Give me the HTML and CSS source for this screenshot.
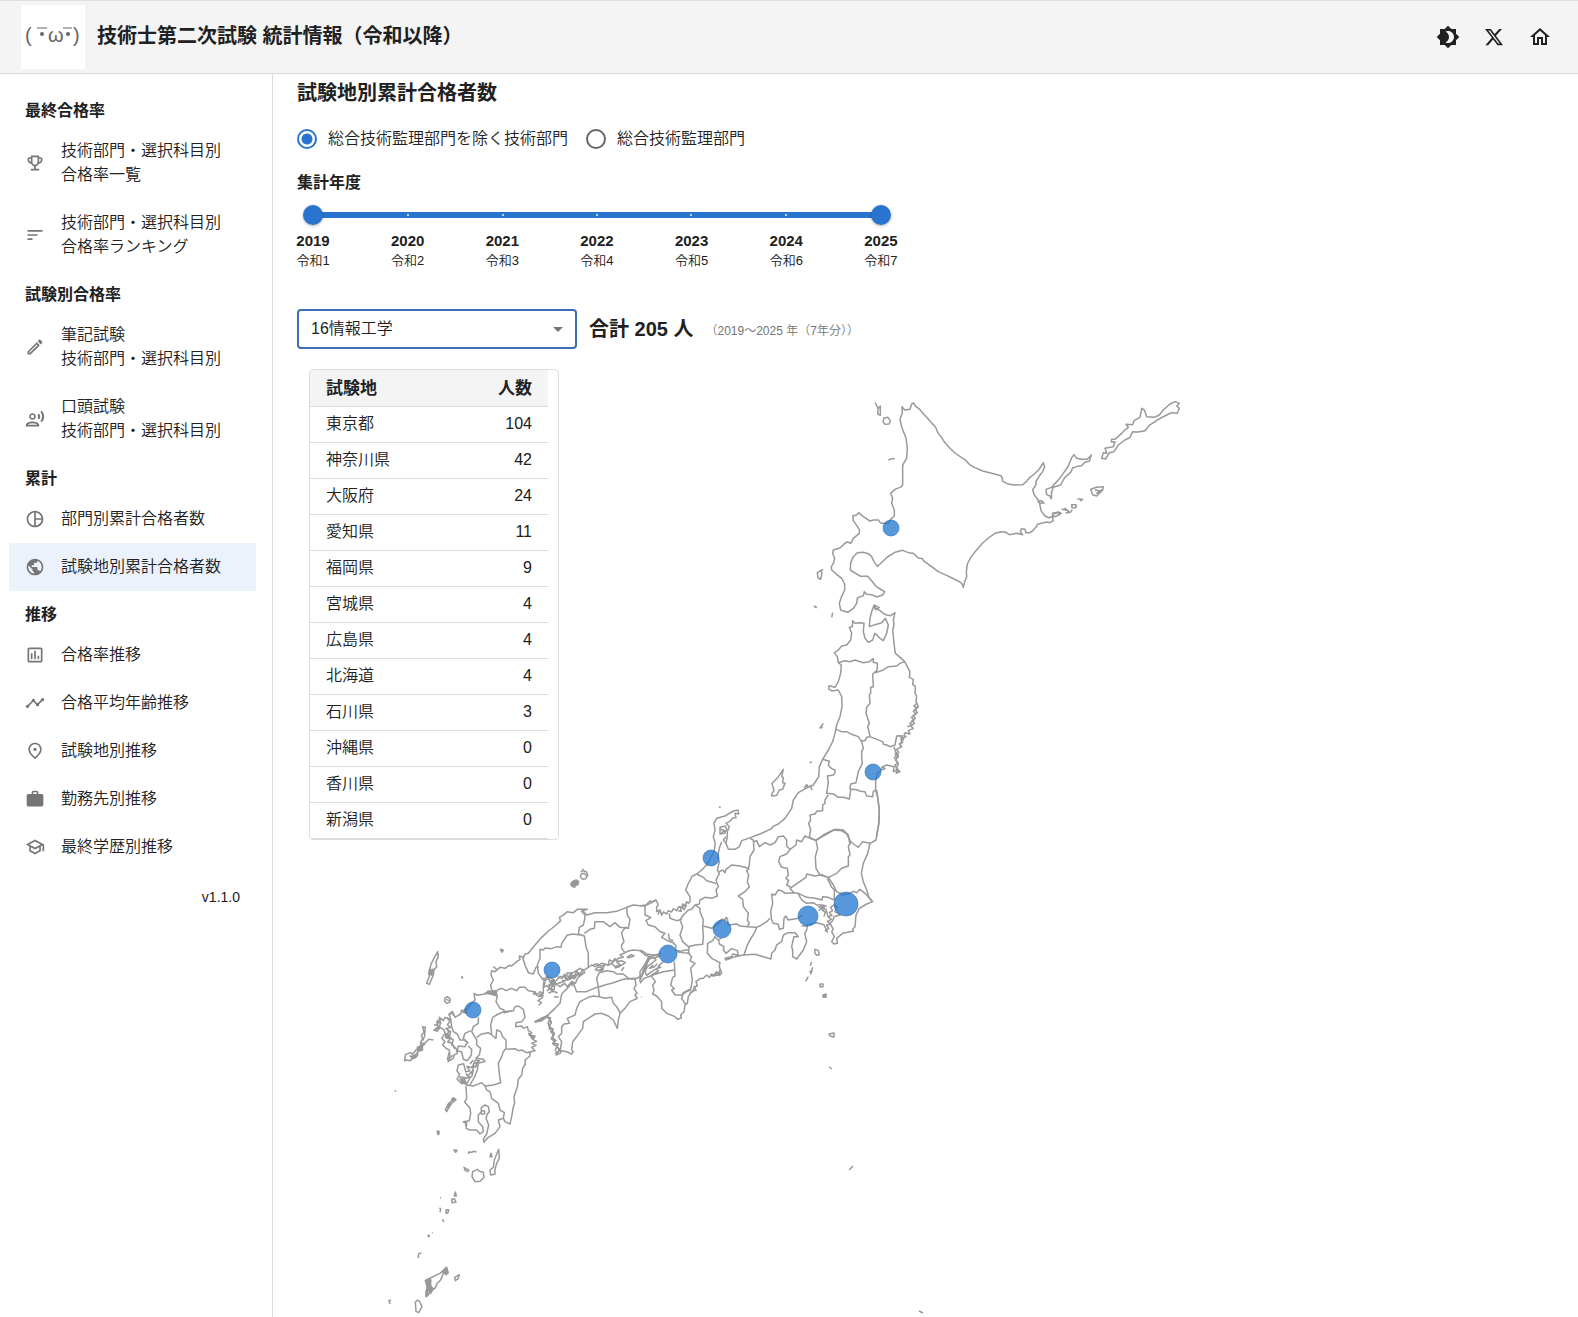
FILE: index.html
```html
<!DOCTYPE html>
<html lang="ja">
<head>
<meta charset="utf-8">
<meta name="viewport" content="width=device-width, initial-scale=1">
<title>技術士第二次試験 統計情報（令和以降）</title>
<link rel="stylesheet" href="styles.css">
</head>
<body>
<header class="header">
  <a class="brand" href="#">
    <svg class="logo" viewBox="0 0 64 64" aria-hidden="true">
      <g class="logo-text"><text x="4" y="37">(</text><text x="27" y="37">ω</text><text x="52" y="37">)</text></g>
      <path d="M16 23h10M42 23h9" class="logo-brow"/>
      <circle cx="21" cy="29" r="2"/><circle cx="47" cy="29" r="2"/>
    </svg>
    <h1 class="brand-title">技術士第二次試験 統計情報（令和以降）</h1>
  </a>
  <div class="actions">
    <button class="icon-button" type="button" aria-label="テーマ切替"><svg class="icon-lg" viewBox="0 0 24 24"><path d="M20 8.69V4h-4.69L12 .69 8.69 4H4v4.69L.69 12 4 15.31V20h4.69L12 23.31 15.31 20H20v-4.69L23.31 12 20 8.69zM12 18c-.89 0-1.74-.2-2.5-.55C11.56 16.5 13 14.42 13 12s-1.44-4.5-3.5-5.45C10.26 6.2 11.11 6 12 6c3.31 0 6 2.69 6 6s-2.69 6-6 6z"/></svg></button>
    <a class="icon-button" href="#" aria-label="X"><svg class="icon" viewBox="0 0 24 24"><path d="M18.244 2.25h3.308l-7.227 8.26 8.502 11.24H16.17l-5.214-6.817L4.99 21.75H1.68l7.73-8.835L1.254 2.25H8.08l4.713 6.231zm-1.161 17.52h1.833L7.084 4.126H5.117z"/></svg></a>
    <a class="icon-button" href="#" aria-label="ホーム"><svg class="icon-lg" viewBox="0 0 24 24"><path d="m12 5.69 5 4.5V18h-2v-6H9v6H7v-7.81l5-4.5M12 3 2 12h3v8h6v-6h2v6h6v-8h3L12 3z"/></svg></a>
  </div>
</header>
<div class="layout">
  <nav class="sidebar">
    <h2 class="nav-heading">最終合格率</h2>
    <a class="nav-item" href="#"><svg class="icon" viewBox="0 0 24 24"><path d="M19 5h-2V3H7v2H5c-1.1 0-2 .9-2 2v1c0 2.55 1.92 4.63 4.39 4.94.63 1.5 1.98 2.63 3.61 2.96V19H7v2h10v-2h-4v-3.1c1.63-.33 2.98-1.46 3.61-2.96C19.08 12.63 21 10.55 21 8V7c0-1.1-.9-2-2-2zM5 8V7h2v3.82C5.84 10.4 5 9.3 5 8zm7 6c-1.65 0-3-1.35-3-3V5h6v6c0 1.65-1.35 3-3 3zm7-6c0 1.3-.84 2.4-2 2.82V7h2v1z"/></svg><span>技術部門・選択科目別<br>合格率一覧</span></a>
    <a class="nav-item" href="#"><svg class="icon" viewBox="0 0 24 24"><path d="M3 18h6v-2H3v2zM3 6v2h18V6H3zm0 7h12v-2H3v2z"/></svg><span>技術部門・選択科目別<br>合格率ランキング</span></a>
    <h2 class="nav-heading">試験別合格率</h2>
    <a class="nav-item" href="#"><svg class="icon" viewBox="0 0 24 24"><path d="m14.06 9.02.92.92L5.92 19H5v-.92l9.06-9.06M17.66 3c-.25 0-.51.1-.7.29l-1.83 1.83 3.75 3.75 1.83-1.83c.39-.39.39-1.02 0-1.41l-2.34-2.34c-.2-.2-.45-.29-.71-.29zm-3.6 3.19L3 17.25V21h3.75L17.81 9.94l-3.75-3.75z"/></svg><span>筆記試験<br>技術部門・選択科目別</span></a>
    <a class="nav-item" href="#"><svg class="icon" viewBox="0 0 24 24"><path d="M9 13c2.21 0 4-1.79 4-4s-1.79-4-4-4-4 1.79-4 4 1.79 4 4 4zm0-6c1.1 0 2 .9 2 2s-.9 2-2 2-2-.9-2-2 .9-2 2-2zm0 8c-2.67 0-8 1.34-8 4v2h16v-2c0-2.66-5.33-4-8-4zm-6 4c.22-.72 3.31-2 6-2 2.7 0 5.8 1.29 6 2H3zM15.08 7.05c.84 1.18.84 2.71 0 3.89l1.68 1.69c2.02-2.02 2.02-5.07 0-7.27l-1.68 1.69zM20.07 2l-1.63 1.63c2.77 3.02 2.77 7.56 0 10.74L20.07 16c3.9-3.89 3.91-9.95 0-14z"/></svg><span>口頭試験<br>技術部門・選択科目別</span></a>
    <h2 class="nav-heading">累計</h2>
    <a class="nav-item" href="#"><svg class="icon" viewBox="0 0 24 24"><path d="M12 2C6.48 2 2 6.48 2 12s4.48 10 10 10 10-4.48 10-10S17.52 2 12 2zm1 2.07c3.61.45 6.48 3.33 6.93 6.93H13V4.07zM4 12c0-4.06 3.07-7.44 7-7.93v15.87c-3.93-.5-7-3.88-7-7.94zm9 7.93V13h6.93c-.45 3.61-3.32 6.48-6.93 6.93z"/></svg><span>部門別累計合格者数</span></a>
    <a class="nav-item nav-item-active" href="#" aria-current="page"><svg class="icon" viewBox="0 0 24 24"><path d="M12 2C6.48 2 2 6.48 2 12s4.48 10 10 10 10-4.48 10-10S17.52 2 12 2zm-1 17.93c-3.95-.49-7-3.85-7-7.93 0-.62.08-1.21.21-1.79L9 15v1c0 1.1.9 2 2 2v1.93zm6.9-2.54c-.26-.81-1-1.39-1.9-1.39h-1v-3c0-.55-.45-1-1-1H8v-2h2c.55 0 1-.45 1-1V7h2c1.1 0 2-.9 2-2v-.41c2.93 1.19 5 4.06 5 7.41 0 2.08-.8 3.97-2.1 5.39z"/></svg><span>試験地別累計合格者数</span></a>
    <h2 class="nav-heading">推移</h2>
    <a class="nav-item" href="#"><svg class="icon" viewBox="0 0 24 24"><path d="M9 17H7v-7h2v7zm4 0h-2V7h2v10zm4 0h-2v-4h2v4zm2 2H5V5h14v14zm0-16H5c-1.1 0-2 .9-2 2v14c0 1.1.9 2 2 2h14c1.1 0 2-.9 2-2V5c0-1.1-.9-2-2-2z"/></svg><span>合格率推移</span></a>
    <a class="nav-item" href="#"><svg class="icon" viewBox="0 0 24 24"><path d="M23 8c0 1.1-.9 2-2 2-.18 0-.35-.02-.51-.07l-3.56 3.55c.05.16.07.34.07.52 0 1.1-.9 2-2 2s-2-.9-2-2c0-.18.02-.36.07-.52l-2.55-2.55c-.16.05-.34.07-.52.07s-.36-.02-.52-.07l-4.55 4.56c.05.16.07.33.07.51 0 1.1-.9 2-2 2s-2-.9-2-2 .9-2 2-2c.18 0 .35.02.51.07l4.56-4.55C8.02 9.36 8 9.18 8 9c0-1.1.9-2 2-2s2 .9 2 2c0 .18-.02.36-.07.52l2.55 2.55c.16-.05.34-.07.52-.07s.36.02.52.07l3.55-3.56C19.02 8.35 19 8.18 19 8c0-1.1.9-2 2-2s2 .9 2 2z"/></svg><span>合格平均年齢推移</span></a>
    <a class="nav-item" href="#"><svg class="icon" viewBox="0 0 24 24"><path d="M12 12c-1.1 0-2-.9-2-2s.9-2 2-2 2 .9 2 2-.9 2-2 2zm6-1.8C18 6.57 15.35 4 12 4s-6 2.57-6 6.2c0 2.34 1.95 5.44 6 9.14 4.05-3.7 6-6.8 6-9.14zM12 2c4.2 0 8 3.22 8 8.2 0 3.32-2.67 7.25-8 11.8-5.33-4.55-8-8.48-8-11.8C4 5.22 7.8 2 12 2z"/></svg><span>試験地別推移</span></a>
    <a class="nav-item" href="#"><svg class="icon" viewBox="0 0 24 24"><path d="M20 6h-4V4c0-1.11-.89-2-2-2h-4c-1.11 0-2 .89-2 2v2H4c-1.11 0-1.99.89-1.99 2L2 19c0 1.11.89 2 2 2h16c1.11 0 2-.89 2-2V8c0-1.11-.89-2-2-2zm-6 0h-4V4h4v2z"/></svg><span>勤務先別推移</span></a>
    <a class="nav-item" href="#"><svg class="icon" viewBox="0 0 24 24"><path d="M12 3 1 9l4 2.18v6L12 21l7-3.82v-6l2-1.09V17h2V9L12 3zm6.82 6L12 12.72 5.18 9 12 5.28 18.82 9zM17 15.99l-5 2.73-5-2.73v-3.72L12 15l5-2.73v3.72z"/></svg><span>最終学歴別推移</span></a>
    <p class="version">v1.1.0</p>
  </nav>
  <main class="main">
    <h2 class="page-title">試験地別累計合格者数</h2>
    <div class="radios" role="radiogroup" aria-label="部門区分">
      <label class="radio-label"><input class="radio" type="radio" name="division" checked>総合技術監理部門を除く技術部門</label>
      <label class="radio-label"><input class="radio" type="radio" name="division">総合技術監理部門</label>
    </div>
    <h3 class="range-title">集計年度</h3>
    <div class="range">
      <div class="range-slider">
        <div class="range-track"><i></i><i></i><i></i><i></i><i></i><i></i><i></i></div>
        <input class="range-input" type="range" min="2019" max="2025" value="2019" aria-label="開始年度">
        <input class="range-input" type="range" min="2019" max="2025" value="2025" aria-label="終了年度">
      </div>
      <div class="range-labels">
        <div class="range-label"><b>2019</b><span>令和1</span></div>
        <div class="range-label"><b>2020</b><span>令和2</span></div>
        <div class="range-label"><b>2021</b><span>令和3</span></div>
        <div class="range-label"><b>2022</b><span>令和4</span></div>
        <div class="range-label"><b>2023</b><span>令和5</span></div>
        <div class="range-label"><b>2024</b><span>令和6</span></div>
        <div class="range-label"><b>2025</b><span>令和7</span></div>
      </div>
    </div>
    <div class="filter">
      <div class="select-box">
        <select class="select" aria-label="技術部門"><option>16情報工学</option></select>
      </div>
      <p class="total">合計 205 人</p>
      <p class="period">（2019〜2025 年（7年分））</p>
    </div>
    <div class="map-area">
      <svg class="map" viewBox="297 349 1257 968" role="img" aria-label="試験地別合格者数の地図">
        <g class="land">
          <!-- Hokkaido and the Kuril islands -->
          <g transform="translate(800 390) scale(.33333)">
            <path d="M341 39L347 49 356 55 366 67 380 82 395 99 407 112 413 127 425 143 434 157 449 174 465 189 482 201 498 212 508 223 525 233 548 243 575 250 603 257 607 265 608 274 622 281 640 285 668 284 680 274 690 262 703 252 718 237 730 218 734 230 728 245 718 258 708 274 708 284 698 300 703 315 715 330 720 345 723 362 735 378 748 384 760 376 757 370 775 366 783 370 770 378 757 382 760 392 750 398 740 396 712 403 710 410 706 413 700 421 690 428 678 428 675 418 665 416 661 425 668 434 650 430 628 434 618 427 605 425 585 430 565 444 545 462 528 482 512 503 502 522 499 545 500 560 494 575 490 592 485 580 478 575 462 567 440 556 415 545 395 530 370 512 368 506 355 504 340 490 325 488 308 481 285 487 262 501 240 522 232 529 222 515 215 500 205 491 190 487 172 488 160 500 152 518 151 540 165 549 182 559 203 559 213 570 228 589 245 600 254 605 248 615 230 621 215 614 200 613 193 605 190 617 172 624 170 640 160 655 143 667 122 660 118 640 124 622 134 600 134 582 125 565 110 553 95 540 94 530 100 520 104 505 98 490 100 480 120 474 137 458 143 456 152 460 160 445 178 430 178 418 160 392 158 378 170 375 176 368 190 380 210 393 220 390 235 390 240 397 245 400 265 400 272 388 283 378 283 360 275 340 278 325 272 310 285 298 305 290 308 284 308 225 320 205 322 175 318 145 305 110 300 88 307 68 306 50 314 60 330 58 335 42Z"/>
            <path d="M822 194L830 205 845 208 862 208 874 195 868 214 855 216 845 227 832 229 818 234 812 247 795 262 790 270 782 285 760 292 755 305 754 327 750 318 740 314 738 298 755 292 778 266 790 250 805 228 815 203ZM1025 55L1020 82 1002 92 998 104 978 103 985 112 975 120 965 130 945 148 935 148 934 156 945 155 940 170 915 175 920 190 910 188 905 205 917 207 928 188 942 185 955 165 975 150 990 142 998 125 1015 126 1035 122 1048 106 1075 88 1100 75 1115 68 1132 70 1138 55 1130 48 1138 40 1125 35 1110 42 1090 60 1078 75 1062 82 1040 80 1033 60ZM872 298L890 292 910 290 908 300 890 318 878 314ZM885 300l15 2-10 8 18-12M832 327l16 1-8 5M815 344h13v9h-12ZM785 357l14 4-4-6 12 10-8 4 12-2 6-8M762 372l10-4 10 2-8 5M712 335l12-3 8 7-14 1M225 38l10 18 6-8v28l-8-4 1-16M252 84l12-2 7 10-4 10-12 1-6-8ZM265 210l14-5 5 3M52 548l10-6 4 6-4 20-8-4ZM62 542l8-4M42 648l8 6M222 645l4 14 12-6Z"/>
          </g>
          <!-- Tohoku and Niigata -->
          <g transform="translate(700 590) scale(.33333)">
            <path d="M522 46L527 55 540 62 550 70 560 75 572 77 585 68 580 90 582 105 578 120 582 160 586 190 598 200 614 215 622 230 630 245 628 262 640 268 638 283 646 290 645 310 650 318 648 335 655 350 645 358 652 368 640 376 646 385 636 392 643 400 632 408 640 415 625 422 630 432 615 428 612 436 618 440 603 448 608 458 598 462 605 470 590 478 596 488 586 493 595 500 586 510 594 518 585 525 590 535 600 545 588 550 592 540 580 545 582 530 560 525 545 532 540 545 532 550 527 572 527 600 533 620 538 660 537 700 530 740"/>
            <path d="M650 340l-8 8 10 6-12 10 8 8-14 10 8 8-12 10 6 6-14 4M600 440l10 8-10 14 4 10M585 485l10 10-8 14 8 12-6 16 8 8"/>
            <path d="M522 46L515 65 510 85 508 110 525 104 545 98 556 85 565 105 560 130 550 152 540 145 525 130 518 150 505 157 495 145 490 125 492 100 478 98 465 100 458 92 457 110 448 112 455 130 452 150 440 165 425 168 415 180 403 188 412 200 415 218 424 225 422 250 415 275 405 292 387 287 386 297 395 303 415 300 425 320 426 350 420 380 410 405 405 430 398 455 385 480 368 508 358 530 356 560 340 585 318 595 295 608 280 630 275 655 255 685 235 702 218 710 215 716 180 732 145 745 125 752 118 770 105 778 85 778 78 760 82 740 82 725 88 710 78 700 92 692 98 684 108 683 105 670 116 672 114 660 100 663 85 672 75 678 50 685 42 700 45 720 40 740 46 760"/>
            <path d="M415 218L435 212 450 215 465 210 490 218 508 215 520 206 520 217 532 220 532 235 528 248 550 240 565 230 590 228 600 220 614 215M532 240L518 252 520 290 512 292 512 310 508 314 510 340 500 352 498 370 508 400 503 410 506 420 510 440 500 442 495 452 485 452M408 418L425 425 440 425 455 433 475 440 485 455 490 475 485 485 485 500 487 520 475 545 468 578 452 582 450 597 475 600 480 604 495 605 500 618 518 620 520 605 527 600M510 440L530 448 548 455 550 463 560 465 570 470 585 465 590 438 605 437 612 445M368 508L388 514 385 525 395 536 405 540 405 548 400 555 382 558 385 575 380 610 400 612 415 622 430 622 448 627 452 600M385 615L375 630 375 640 368 645 368 662 350 664 345 672 330 675 332 690 326 700 332 720 328 740 335 746 348 750 375 735 405 718 430 720 445 735 450 765M312 594l8-10 4 8M330 585l6 16"/>
            <path d="M250 538L245 560 250 562 248 578 255 580 248 598 238 600 230 616 215 618 215 612 222 602 216 580 224 572 235 560ZM342 48l8 4M398 68l-3 14M370 400l-10 14 8-2M335 515l-6 4M60 712l16-4 4 10-6 12-14 2ZM62 718l14 4-12 6M58 651l2 2M582 470l8 24-8 12M545 530l10 6-12 4"/>
          </g>
          <!-- Kanto, Chubu and Kinki -->
          <g transform="translate(640 790) scale(.33333)">
            <path d="M226 160L222 185 200 225 185 240 170 252 155 260 150 272 145 280 137 300 150 320 150 335 145 340 140 335 136 346 128 342 126 352 116 350 110 362 100 356 95 366 85 362 80 372 70 366 65 376 60 360 50 365 50 350 55 345 48 330 38 335 30 333 15 348 0 347M258 160L250 150 258 140M710 0L718 60 716 100 708 150 690 160 683 190 670 220 664 250 670 275 680 300 688 325 698 335 680 342 658 355 648 375 645 410 638 418 640 424 630 425 608 430 590 445 592 460 582 462 575 455 583 440 575 425 580 418 570 400 578 392 582 380 600 375 585 365 590 350 580 345"/>
            <path d="M245 155L238 175 233 200 238 215 232 240 238 250 228 270 235 290 228 300 232 318 215 325 195 322 180 330 178 342 165 345 155 358 145 360 130 375 120 390 128 410 120 435 128 455 145 470 165 465 188 463 190 440 188 408M170 252L190 262 200 272 222 278 228 282M238 245L248 240 255 248 258 238 275 225 300 228 325 235 328 225 330 200 342 180 340 150 330 145M340 155L350 152 358 170 375 158 390 165 405 158 415 140 430 138 440 150 440 168 450 178 468 165 470 150 485 155 495 138 510 145 528 152 550 135 580 120 605 122 620 132 632 155 645 165 655 172 668 155 690 160M450 178L440 192 420 200 416 215 425 232 442 235 445 255 438 265 446 272 440 285 450 290 452 300M528 152L533 175 526 200 528 235 540 255 562 262M450 295L475 278 498 262 500 252 525 258 545 254 565 262 590 250 605 235 625 228 625 200 630 195 625 170 632 155M565 262L580 285 590 305 610 315 630 310 640 304 650 308 660 298 675 310 698 335M562 265L574 290 583 300 583 330M452 298L462 308 475 310 500 322 525 325 546 330 548 320 565 322 583 330M475 312L485 330 500 340 520 338 530 345 548 345 560 350M462 308L435 310 425 302 415 300 405 315 395 312 398 340 392 365 395 390 400 400 415 403 418 418 430 415 432 385 437 378 445 390 475 385 485 375M390 385L380 395 365 405 350 412 345 425 330 450 320 470 312 495M328 235L320 242 326 255 322 275 328 290 315 305 295 318 308 328 310 350 325 370 322 390 328 400 322 410 350 412M322 410L300 408 290 402 265 405 262 385 258 382 255 390 245 388 235 400 215 415 205 412 188 408 190 390 180 365 180 355 165 345"/>
            <path d="M582 345L572 352 578 362 568 368 576 376 564 380 574 388 562 394 572 402 560 406 566 416 556 422 562 426 552 404 530 398 500 405M534 352l20-4-8 12 10 6-4 14M536 362l8-8 14 4 6 22M485 408L502 408 500 420 494 430 500 455 490 480 470 507 458 500 458 480 455 470 462 440 475 440 465 428 445 428 430 435 425 455 410 465 405 480 395 490 393 507 370 500 345 493 310 495 285 500 258 510 255 505 275 500 278 492 295 496 292 482 275 476 258 490 250 480 252 470 238 462 236 450 244 444M234 450L225 440 218 452 203 460 202 490 215 505 240 518 238 530 245 550 238 556 230 545 222 558 215 552 208 562 200 555 190 565 180 566 168 575 172 588 162 590 168 600 155 605 145 620 142 640 135 645 132 665 122 675 124 684 112 688 105 680 80 670 65 655 65 635 50 618 38 612 42 600 38 585 46 575 35 560 38 552M88 370L90 385 110 392 125 388M148 470L145 490 155 500 150 512 165 520 152 535 157 570 152 600 140 605 125 615 105 615 95 600 103 596 92 585 98 562 105 558 103 515M152 597L130 608 125 625 138 645M38 555L70 545 103 540M70 515L55 528 62 532 48 536 55 543 35 555M15 348L15 375 32 382 18 392 25 405 45 410 60 425 75 430 65 442 82 452 100 458 108 468 106 480 122 484 148 478M85 430L88 448 100 452M110 485L130 488 150 490M62 490L30 500 15 495 0 482M35 502L20 515 0 545 0 575M40 500L48 510 35 520 22 530 15 545 20 556 35 545 60 530M0 580L12 565 40 555"/>
            <path d="M525 478l10 4 3 12-8 2-6-8ZM515 515l-4 12M518 532l-6 20 4-10-8 4M505 560l-8 14M540 582h9v8h-9ZM551 616h6v5h-6ZM238 51h4M140 345l-8 14-6-6 10-8M120 350l4 14-10-2M60 360l-6 14M230 548l-14 10 22-4 2-14-6 14-24 2M165 590l-8 16-8 2"/>
          </g>
          <!-- Chugoku and Shikoku -->
          <g transform="translate(480 850) scale(.33333)">
            <path d="M528 150L515 158 500 165 480 167 460 165 440 172 410 184 380 188 345 188 320 195 308 182 322 178 292 178 280 188 262 185 252 194 238 202 242 212 225 228 205 243 185 262 165 285 145 310 135 312 130 322 118 318 120 328 110 335 95 348 88 346 75 355 60 352 45 365 35 362 33 375 40 390 32 405 35 420 48 432 52 420 65 415 78 422 95 415 110 422 118 412 135 412 145 422 165 425 170 436 180 425 190 430 190 415 192 390 200 380 210 392 225 395 240 380 260 378 262 368 275 370 300 355 310 362 325 352 335 345 345 350 365 340 385 345 388 330 400 335 415 325 430 322 420 315 435 308 445 303 460 300 485 302 500 312 540 318"/>
            <path d="M128 322L135 345 145 368 160 372 168 352 176 350 M190 390L175 370 172 345 180 325 180 298 190 300 195 294 215 296 230 290 243 292 245 280 262 255 280 252 300 255M303 182L315 195 314 208 310 225 298 232 295 252 313 258 318 290 325 310 325 352M313 250L330 238 343 235 345 215 370 215 390 230 405 218 420 232 443 235M440 172L442 195 450 208 445 235 436 232 425 248 428 262 432 275 425 285 425 295 435 308"/>
            <path d="M245 432L262 415 272 402 280 400 290 425 320 425 335 418 355 410 350 385 358 368 380 362 400 365 410 372 430 372 445 385 465 388 475 382M355 412L375 405 400 398 430 388 465 385 468 405 462 415 470 428 465 436 472 445 450 455 435 475 420 490 415 510 412 535 400 510 385 498 365 490 345 492 325 505 310 515 308 535 290 560 278 575 275 600 280 605 275 612 260 605 245 602 240 610 228 615 240 598 230 590 235 582 218 580 228 572 215 568 222 555 212 545 220 538 208 530 214 515 206 505 200 500 185 505 165 515 185 510 205 494 225 475 240 460 245 432M355 412L358 440 340 438 325 442 300 455 290 475 285 495 262 505 268 520 252 522 245 530 245 550 235 560 245 575 240 605M358 440L375 445 395 442 400 460 410 470 420 488M540 318L520 325 505 322 495 345 485 375 472 385M508 325L495 358 480 390"/>
            <path d="M232 380l14 6 8-14 8 16 12-20 6 18 10-24 8 18 10-22 6 10-20 14-8 18-10-6-14 16-8-10-14 10-12-8 20-6 24-14 20-6M246 392l24-4 16-12 22-10M262 378l14 2 14-8M340 345l10-4 14 8 12-6-8 12-14-4-8 8 16 4 10-6M350 362l18-4M382 348l12-8 12 10 14-6-10-8 14-4 12 6-18 12-14 4M396 340l8-14 10 8M440 322l14-8 8 4-18 6M424 362l8-10M188 384l8 8 10-10 14 6-10 8 8 10-6 12 8 8M196 395l-6 16 12-4 6 10-8 6M210 402l16-4-4 22-10-4M176 438l10-8 2 12-14 10 10 6-8 8M160 425l10 8-12-2M165 515l18-8 14-4-16 10M200 500l12 4-8 16 8 14-6 4M215 540l8 10-8 14 10 4-6 14 12 6-6 16M225 610l12-8-2-8M40 350l10 8M28 430l18 6-6-14M280 408l-8-6 12-4M520 345l-12 10 14-4 10-10"/>
            <path d="M250 378l12 12 12-14 10 10 10-18 8 10M205 385l10 14 8-10-4 20-12-6 4 18M185 432l-10 8 16-4M206 510l8 8-8 8 8 16 6 14-6 10 10 8"/>
            <path d="M302 66l8-4 10 4 3 10-6 10-9 2-7-8 3-8 10-2 6 8M309 56v6M470 430l2 2M484 440l2 2M205 430l12-6 16 4M222 440l14 2"/>
            <path class="islet" d="M272 102l6-8 10-4 8 4-2 10-8 2-2 6-8-3ZM62 298l7 4-4 4Z"/>
          </g>
          <!-- Kyushu -->
          <g transform="translate(370 930) scale(.33333)">
            <path d="M380 200L378 185 365 188 355 182 345 192 322 196 312 190 315 210 300 225 285 245 275 240 272 252 255 262 248 245 238 255 242 270 225 262 220 272 208 262 212 280 200 275 205 290 192 300 202 304 210 292 222 300 225 310 215 325 225 335 218 345 228 355 238 360 240 380 234 395 250 385 252 375 262 370 258 355 245 345 250 330 238 322 242 305 232 302M325 262L325 280 310 290 305 305 320 330 320 345 332 355 328 375 318 385 340 388 345 394 325 400 322 420 314 440 300 465M302 302L285 310 280 325 295 340 M242 265L245 290 250 305 262 312 270 330 282 330 292 336 285 350 265 348 262 362 275 366 280 388 292 392 304 375 305 358 295 348M320 322L335 312 355 308 365 315 378 325 380 300 392 305 398 320 408 330 408 355 400 365 395 380 385 400 388 430 392 458 370 465 345 468 335 458 310 468 290 465M365 315L362 285 368 262 385 252 402 245 430 242M378 185L382 200 378 215 390 235 402 240 402 248 430 242 435 230 445 228 460 238 465 262 455 275 438 278 437 290 455 288 460 295 472 290 475 302 485 308 478 316 495 318 488 328 500 334 485 340 498 346 485 352 495 362 480 365 480 378 465 390 466 402 458 415 455 435 445 448 442 470 432 500 434 520 430 530 425 560 420 582 405 575 400 565 385 570 390 590 375 610 355 622 342 637 340 628 350 612 356 585 348 565 352 552 358 545 355 530 345 525 334 532 334 545 325 555 325 575 338 590 340 605 330 612 320 600 300 600 288 595 290 582 280 575 298 572 302 550 300 535 284 516 290 505 288 468M410 358L435 356 445 362 455 360 470 368 485 365M345 468L350 480 360 485 365 505 385 520 390 540 403 548 400 565M334 543h10v9h-10Z"/>
            <path d="M203 65L205 80 198 95 200 110 192 120 190 135 178 163 170 160 178 140 178 120 184 100 192 85ZM176 120l16-2-6 12-10 2 14 4M224 205l8-5 8 6v10l-10 4-6-6ZM228 208l10 4M104 392l2-18 14-6 8 4 12-14 10-4 4-16 10 4-12 12 6 6-14 4-2 14-14-2-6 16-12-2ZM118 378l20 4-14 6 18-20 4-14M150 350l16-12 10-10 14 2M150 340l8-14-4-10 8-8-4-18 8 2-2 26-6 14M192 284l10 2 2-16 8 8-4 14-12 8M235 255l10-10 6 12M230 262l10 12-8 10 10 8-14 4 12 8-10 8 6 6M225 310l12 4-6 8 12 2-10 12 12 4M238 366l-6 22 6-2 10-10M240 335l8 8 6 14M265 405l-4 18 8 10-8 14 14 14 18-4 8-16-10-4 16-10 4-20-8 6-12-4 8 14-12 2-6-24ZM268 440l22 4-16 8 22-10-8-12M308 408l8-18 14 2M312 402l14-8-12 18 8-6M300 402l10-12M230 545l-4-6 10-18 10-10 4-8 8 6-12 10-10 14ZM280 575l10 4-4 10M280 445l12 20-18-10M300 430l10-10-4 18-8 6"/>
            <path class="islet" d="M392 58l7 2-3 6ZM275 141l3 1-2 2ZM74 484l5-2M202 604h5v8ZM252 660l9 1-4 6ZM345 190l16-6 16-2v14l-16-4ZM286 235l-8 12 10 2ZM476 310l18 12-8 4ZM496 276l20-12 18-8-18 16ZM178 122l12 2-4 10-10-2ZM142 352l12-6 4 8-14 8ZM228 312l10 6-4 8-8-4ZM270 446l12 2 4 8-10 2ZM232 532l4-12 6 2-6 12ZM246 506l8 2-6 6Z"/>
          </g>
          <!-- Satsunan, Amami and the Izu chain -->
          <g transform="translate(370 1130) scale(.33333)">
            <path d="M386 58L388 85 380 100 375 118 375 133 362 135 360 120 370 112 373 90ZM322 118L328 124 340 127 342 142 330 154 315 155 306 140 308 125ZM282 112l6 4 8 4-2 5-8-3ZM296 72v-6l10 1 4-3 10 2M360 80l3-10 3 10ZM245 208l8-2 5 10-12 2ZM256 186l-3 12h6ZM228 240l8-1-2 9-6 2ZM208 234l4 2-2 10M218 268l3 8M172 318l6-2-2 6M144 384l2-12 8-4M60 522l-3-10 6-2M136 516l6-5 6 2 8 17-10 18-8-4ZM168 450L210 430 230 412 234 428 220 430 212 450 200 462 196 474 184 482 172 498 172 480ZM172 452l10 0-4 10 6 12-10-4 8 18M170 460l12-2M254 442l14-8-4 12-8 6ZM210 203h3M186 308l2 1"/>
            <path class="islet" d="M166 452l16-4v20l8 8-8 14-8-8-6 18v-18l6-10ZM218 426l10-14 6 16-6 6ZM202 4l4 2-2 8Z"/>
          </g>
          <path d="M849 1170l4-4M829 1034l5-1v4l-4-1ZM829 1067l3 2M919 1311l4 2M823 995l3-1v3h-3Z"/>
        </g>
        <g class="markers">
          <circle cx="891" cy="528" r="8"/><circle cx="873" cy="772" r="8"/><circle cx="711" cy="858" r="8"/>
          <circle cx="846" cy="904" r="12"/><circle cx="808" cy="916" r="10"/><circle cx="722" cy="929" r="9"/>
          <circle cx="668" cy="954" r="9"/><circle cx="552" cy="970" r="8"/><circle cx="473" cy="1010" r="8"/>
        </g>
      </svg>
      <div class="table-card">
        <table class="table">
          <thead><tr><th scope="col">試験地</th><th scope="col">人数</th></tr></thead>
          <tbody>
            <tr><td>東京都</td><td>104</td></tr>
            <tr><td>神奈川県</td><td>42</td></tr>
            <tr><td>大阪府</td><td>24</td></tr>
            <tr><td>愛知県</td><td>11</td></tr>
            <tr><td>福岡県</td><td>9</td></tr>
            <tr><td>宮城県</td><td>4</td></tr>
            <tr><td>広島県</td><td>4</td></tr>
            <tr><td>北海道</td><td>4</td></tr>
            <tr><td>石川県</td><td>3</td></tr>
            <tr><td>沖縄県</td><td>0</td></tr>
            <tr><td>香川県</td><td>0</td></tr>
            <tr><td>新潟県</td><td>0</td></tr>
          </tbody>
        </table>
      </div>
    </div>
  </main>
</div>
</body>
</html>
```
FILE: styles.css
```css
* { box-sizing: border-box; }

body {
  margin: 0;
  background: #fff;
  color: #212121;
  font: 350 16px/24px "Liberation Sans", "Noto Sans CJK JP", sans-serif;
}

h1, h2, h3, p { margin: 0; }

a { color: inherit; text-decoration: none; }

svg { display: block; }

.icon { width: 20px; height: 20px; flex: none; fill: currentColor; }
.icon-lg { width: 24px; height: 24px; flex: none; fill: currentColor; }

/* Header */
.header {
  display: flex;
  align-items: center;
  justify-content: space-between;
  height: 74px;
  padding: 0 16px 0 21px;
  background: #f4f4f4;
  border-top: 1px solid #e0e0e0;
  border-bottom: 1px solid #d6d6d6;
}

.brand { display: flex; align-items: center; gap: 12px; }
.logo { width: 64px; height: 64px; background: #fff; fill: #666; }
.logo-text { font-size: 20px; font-family: "Liberation Sans", sans-serif; }
.logo-brow { stroke: #666; stroke-width: 1; }
.brand-title { padding-bottom: 2px; font-size: 20px; line-height: 30px; font-weight: 700; }

.actions { display: flex; gap: 2px; }
.icon-button {
  display: flex;
  align-items: center;
  justify-content: center;
  width: 44px;
  height: 44px;
  padding: 0;
  border: 0;
  background: none;
  color: #212121;
}

/* Navigation */
.layout { display: flex; align-items: stretch; min-height: calc(100vh - 74px); }

.sidebar {
  flex: none;
  width: 273px;
  padding: 13px 16px 16px 9px;
  border-right: 1px solid #dcdcdc;
}

.nav-heading {
  padding: 12px 16px 4px;
  font-size: 16px;
  line-height: 24px;
  font-weight: 700;
}

.nav-item {
  display: flex;
  align-items: center;
  gap: 16px;
  padding: 12px 16px;
}
.nav-item .icon { color: #757575; }
.nav-item-active { background: #ecf2fb; }

.version { padding: 15px 16px; font-size: 14px; line-height: 22px; text-align: right; }

/* Main column */
.main { flex: 1; min-width: 0; padding: 4px 24px 0; }
.page-title { font-size: 20px; line-height: 30px; font-weight: 700; }

.radios { display: flex; gap: 18px; padding: 19px 0 20px; }
.radio-label { display: flex; align-items: center; gap: 11px; }
.radio {
  appearance: none;
  width: 20px;
  height: 20px;
  margin: 0;
  border: 2px solid #666;
  border-radius: 50%;
}
.radio:checked {
  border-color: #2874cf;
  background: radial-gradient(circle, #2874cf 5px, transparent 6px);
}

.range-title { font-size: 16px; line-height: 24px; font-weight: 700; }
.range { max-width: 600px; margin-top: 10px; }
.range-slider { position: relative; height: 20px; padding: 7px 16px; }
.range-track {
  display: flex;
  align-items: center;
  justify-content: space-between;
  height: 6px;
  background: #2874cf;
}
.range-track i { width: 2px; height: 2px; background: #b9d5f1; }
.range-input {
  position: absolute;
  top: 0;
  left: 6px;
  right: 6px;
  width: calc(100% - 12px);
  height: 20px;
  margin: 0;
  appearance: none;
  background: none;
  pointer-events: none;
}
.range-input::-webkit-slider-thumb {
  appearance: none;
  width: 20px;
  height: 20px;
  border-radius: 50%;
  background: #2874cf;
  box-shadow: 0 1px 3px rgba(0, 0, 0, .3);
  pointer-events: auto;
}
.range-labels { display: flex; justify-content: space-between; margin-top: 6px; }
.range-label {
  display: flex;
  flex-direction: column;
  align-items: center;
  width: 32px;
  font-size: 13px;
  line-height: 20px;
  white-space: nowrap;
}
.range-label b { font-size: 15px; font-weight: 700; }

.filter { display: flex; align-items: center; gap: 12px; margin-top: 38px; }
.select-box { position: relative; width: 280px; }
.select-box::after {
  content: "";
  position: absolute;
  top: 18px;
  right: 14px;
  border: 5px solid transparent;
  border-top-color: #757575;
  border-bottom: 0;
  pointer-events: none;
}
.select {
  display: block;
  width: 100%;
  height: 40px;
  padding: 0 12px;
  appearance: none;
  border: 2px solid #3a6fb5;
  border-radius: 4px;
  background: #fff;
  color: inherit;
  font: inherit;
}
.total { font-size: 20px; line-height: 30px; font-weight: 700; }
.period { padding-top: 4px; color: #757575; font-size: 12px; line-height: 20px; }

/* Map with the table laid over its corner */
.map-area { display: grid; }
.map { grid-area: 1 / 1; width: 100%; }
.land path {
  fill: none;
  stroke: #999;
  stroke-width: 1.5;
  stroke-linejoin: round;
  vector-effect: non-scaling-stroke;
}
.land .islet { fill: #999; }
.markers circle { fill: #1f74d0; fill-opacity: .75; stroke: #2b6cb8; stroke-opacity: .6; }

.table-card {
  grid-area: 1 / 1;
  align-self: start;
  justify-self: start;
  z-index: 1;
  width: 250px;
  margin: 20px 0 0 12px;
  padding-right: 10px;
  border: 1px solid #dcdcdc;
  border-radius: 4px;
  background: #fff;
  overflow: hidden;
}
.table { width: 100%; border-collapse: separate; border-spacing: 0; }
.table th, .table td {
  padding: 5px 16px 6px;
  border-bottom: 1px solid #dcdcdc;
  text-align: left;
}
.table th { padding: 7px 16px 5px; background: #f4f4f4; font-size: 17px; font-weight: 700; }
.table th:last-child, .table td:last-child { text-align: right; }
```
